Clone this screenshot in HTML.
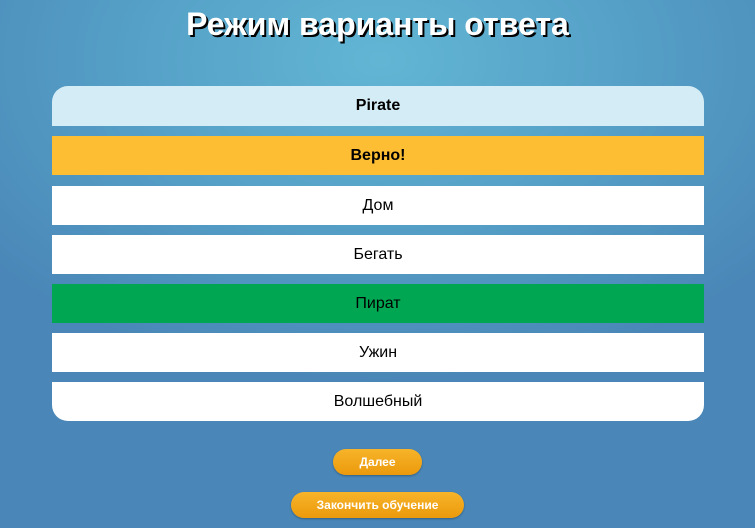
<!DOCTYPE html>
<html><head><meta charset="utf-8"><style>
html,body{margin:0;padding:0}
body{width:755px;height:528px;overflow:hidden;position:relative;font-family:"Liberation Sans",sans-serif;
background:radial-gradient(ellipse 500px 320px at 380px 60px,#62b6d4 0%,#55a0c7 50%,#4a87b8 100%);}
h1{position:absolute;top:6px;left:0;width:755px;margin:0;text-align:center;font-size:32px;font-weight:bold;color:#fff;text-shadow:2px 2px 0 #000;}
.row{position:absolute;left:52px;width:652px;height:39px;line-height:40px;text-align:center;font-size:16px;color:#000;background:#fff}
.btn{position:absolute;height:26px;line-height:27px;text-align:center;color:#fff;font-size:12px;font-weight:bold;border-radius:13px;background:linear-gradient(#f7b42a,#ec9a0c);box-shadow:0 1px 2px rgba(0,0,0,.3)}
</style></head><body>
<h1>Режим варианты ответа</h1>
<div class="row" style="top:86px;background:#d4ecf5;font-weight:bold;border-radius:16px 16px 0 0;height:40px">Pirate</div>
<div class="row" style="top:136px;background:#fdbe33;font-weight:bold">Верно!</div>
<div class="row" style="top:186px">Дом</div>
<div class="row" style="top:235px">Бегать</div>
<div class="row" style="top:284px;background:#00a651">Пират</div>
<div class="row" style="top:333px">Ужин</div>
<div class="row" style="top:382px;border-radius:0 0 16px 16px">Волшебный</div>
<div class="btn" style="left:333px;top:449px;width:89px">Далее</div>
<div class="btn" style="left:291px;top:492px;width:173px">Закончить обучение</div>
</body></html>
